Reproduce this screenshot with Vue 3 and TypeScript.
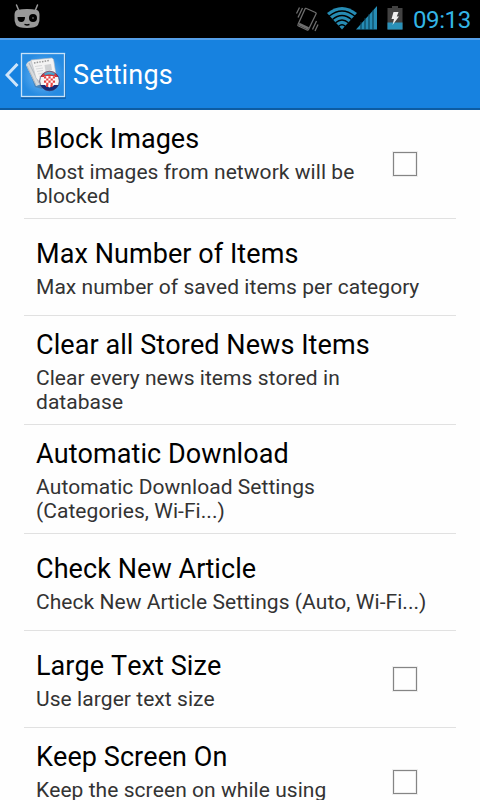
<script setup lang="ts">
interface Preference {
  title: string
  summary: string
  toggle?: boolean
}

const preferences: Preference[] = [
  { title: 'Block Images', summary: 'Most images from network will be\nblocked', toggle: true },
  { title: 'Max Number of Items', summary: 'Max number of saved items per category' },
  { title: 'Clear all Stored News Items', summary: 'Clear every news items stored in\ndatabase' },
  { title: 'Automatic Download', summary: 'Automatic Download Settings\n(Categories, Wi-Fi...)' },
  { title: 'Check New Article', summary: 'Check New Article Settings (Auto, Wi-Fi...)' },
  { title: 'Large Text Size', summary: 'Use larger text size', toggle: true },
  { title: 'Keep Screen On', summary: 'Keep the screen on while using\n ', toggle: true },
]
</script>

<template>
  <div class="screen">
    <div class="status">
      <svg class="robot" width="28" height="26" viewBox="0 0 28 26">
        <path d="M3.500 1 6 7M24.500 1 22 7" stroke="#999" stroke-width="1.500" stroke-linecap="round" />
        <path d="M4 6Q14 4 24 6Q26.500 7 26.500 11Q27 17 25 21Q23 24 14 24Q5 24 3 21Q1 17 1.500 11Q1.500 7 4 6Z" fill="#999" />
        <path d="M4.500 13H12Q12 18 8.300 18Q4.500 18 4.500 13Z" fill="#000" />
        <circle cx="20" cy="14" r="4" fill="#000" />
        <circle cx="20" cy="14" r="1" fill="#555" />
        <path d="M11.500 20.300 14 21 16.500 20.500" stroke="#000" stroke-width="1.400" fill="none" />
      </svg>
      <div class="indicators">
        <svg width="24" height="28" viewBox="0 0 24 28" fill="none" stroke="#6e6e6e" stroke-width="1.300">
          <path d="M11.500 2.500 20.500 6.500Q21.500 7 21 8L13.500 23.500Q13 24.500 12 24L3.500 20Q2.500 19.500 3 18.500L10 3Q10.500 2 11.500 2.500Z" />
          <path d="M4 18 13.500 22.500" stroke-width="2.500" />
          <path d="M4.500 1.500 1.500 7.500M7.500 2 3 11.500M21.500 15 17.500 23.500M23 18.500 20 25" />
        </svg>
        <svg class="wifi" width="32" height="24" viewBox="0 0 32 24">
          <path d="M1 7Q16 -5 31 7L16 23.500Z" fill="#268cb4" />
          <path d="M3.300 10Q16 0 28.700 10M6.500 13.500Q16 5.500 25.500 13.500M9.500 16.800Q16 11 22.500 16.800M12.700 20.300Q16 17 19.300 20.300" fill="none" stroke="#000" stroke-width="1.400" />
        </svg>
        <svg class="signal" width="22" height="24" viewBox="0 0 22 24">
          <path d="M0 23.500 21 0V23.500Z" fill="#268cb4" />
          <path d="M5 16V24M9 12V24M13 8V24M17 4V24" stroke="#07394d" stroke-width="1" />
        </svg>
        <svg class="battery" width="16" height="24" viewBox="0 0 16 24">
          <path d="M5 0H11V2H15.500V23.500H.5V2H5Z" fill="#424242" />
          <path d="M.5 16.500H15.500V23.500H.5Z" fill="#2a91b9" />
          <path d="M6.500 6H11.500L9.800 10.500H12L5.500 19 7 13H4.500Z" fill="#eee" />
        </svg>
        <span class="clock">09:13</span>
      </div>
    </div>

    <header class="bar">
      <svg class="back" width="14" height="24" viewBox="0 0 14 24">
        <path d="M12.500 1 2 12 12.500 23" fill="none" stroke="#cfe5fa" stroke-width="3" />
      </svg>
      <svg class="logo" width="48" height="50" viewBox="0 0 48 50">
        <defs>
          <radialGradient id="tile"><stop stop-color="#78bbf3" /><stop offset="1" stop-color="#268be2" /></radialGradient>
          <linearGradient id="gloss" x2="0" y2="1"><stop stop-color="#fff" stop-opacity=".25" /><stop offset=".5" stop-color="#fff" stop-opacity="0" /></linearGradient>
          <clipPath id="ball"><circle cx="29.500" cy="30" r="9.800" /></clipPath>
        </defs>
        <rect x="1" y="3" width="45" height="45" rx="1" fill="#0b4c8d" opacity=".55" />
        <rect x="1.500" y="2.500" width="43" height="43" fill="url(#tile)" stroke="#c7e2f8" stroke-width="1.300" />
        <path d="M8 17 14 8 28 21 22 38 15 36Z" fill="#456d91" opacity=".55" />
        <path d="M6 14Q7 10 13 9L25 32 16 35Z" fill="#d7dadd" />
        <path d="M7 15 16 34M9 12 19 32" stroke="#a5adb5" stroke-width=".8" />
        <path d="M11 9 32 7Q34 8 34 11L36 24 20 31 16 27Z" fill="#f3f3f3" stroke="#b5bbc1" stroke-width=".6" />
        <path d="M14 12 29 9.500" stroke="#999" stroke-width="1.500" stroke-dasharray="1.500 1.200" />
        <path d="M15 15.500 22 14.500M16 18 23 17M17 20.500 23 19.500M18 23 23 22M19 25.500 22 24.500" stroke="#cfd1d3" stroke-width=".8" />
        <path d="M24.500 14 31 13 32 19 25.500 20Z" fill="#cfd1d3" />
        <g clip-path="url(#ball)">
          <path d="M19 20H41V26H19Z" fill="#d93538" />
          <path d="M19 26H41V34H19Z" fill="#f5f5f5" />
          <path d="M19 34H41V42H19Z" fill="#172a78" />
          <path d="M24 25H35V33Q33 36 29.500 36.500Q26 36 24 33Z" fill="#fff" />
          <path d="M24 26.300H35M26.200 28.500H35M24 30.700H35M26.200 32.900H35M26 35H33" stroke="#e54343" stroke-width="2.200" stroke-dasharray="2.200 2.200" />
          <path d="M24.500 23.500 27 22.500 29.500 22 32 22.500 34.500 23.500" stroke="#3b9ac5" stroke-width="2.400" fill="none" />
        </g>
        <circle cx="29.500" cy="30" r="9.800" fill="none" stroke="#352c5b" stroke-width=".7" />
        <path d="M20.500 27Q22 20.500 29.500 20.500Q37 20.500 38.500 27Z" fill="url(#gloss)" />
      </svg>
      <h1>Settings</h1>
    </header>

    <ul class="list">
      <li v-for="item in preferences" :key="item.title" class="row">
        <div class="text">
          <h2>{{ item.title }}</h2>
          <p>{{ item.summary }}</p>
        </div>
        <span v-if="item.toggle" class="check" role="checkbox" aria-checked="false"></span>
      </li>
    </ul>
  </div>
</template>

<style>
body { background: #fff; overflow: hidden; }
</style>

<style scoped>
.screen { width: 480px; height: 800px; overflow: hidden; background: #fefefe; font-family: Roboto, sans-serif; font-kerning: none; }
.status { height: 38px; background: #000; display: flex; justify-content: space-between; padding: 0 9px 0 13px; box-sizing: border-box; }
.robot { margin-top: 4px; }
.indicators { display: flex; align-items: flex-start; padding-top: 6px; }
.wifi { margin-left: 7px; }
.signal { margin-left: -2px; }
.battery { margin-left: 9px; }
.clock { margin-left: 10px; width: 58px; font-size: 24px; line-height: 28px; letter-spacing: -.4px; color: #33b5e5; white-space: nowrap; }
.bar { height: 72px; box-sizing: border-box; display: flex; align-items: center; padding: 1px 0 0 5px; background: #1782e0; border-top: 2px solid #559fe8; border-bottom: 2px solid #0d5ca3; }
.logo { margin: 2px 0 0 1px; }
.bar h1 { margin: 1px 0 0 5px; font-size: 27px; line-height: 32px; font-weight: 400; letter-spacing: .15px; color: #fff; }
.list { list-style: none; margin: 0; padding: 0 24px; }
.row { display: flex; align-items: center; justify-content: space-between; min-height: 97px; box-sizing: border-box; padding: 10px 39px 10px 12px; border-bottom: 1px solid #e1e1e1; }
.text { padding-top: 2px; }
.row h2 { margin: 0 0 4px; font-size: 27px; line-height: 34px; font-weight: 400; letter-spacing: .07px; color: #000; white-space: nowrap; }
.row p { margin: 0; font-size: 21px; line-height: 24px; letter-spacing: .05px; color: #333; white-space: pre; }
.check { width: 24px; height: 24px; box-sizing: border-box; border: 1px solid #858585; box-shadow: 0 0 0 1px #eee, inset 0 0 0 1px #eee; flex: none; }
</style>
